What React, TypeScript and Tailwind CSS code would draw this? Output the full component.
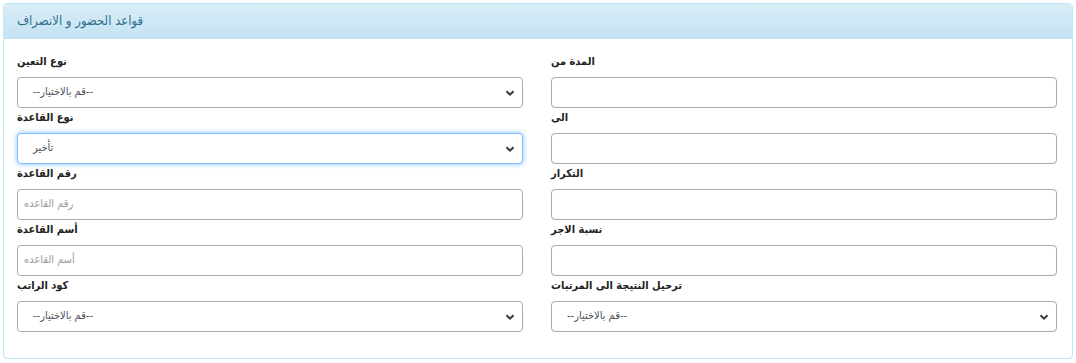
import React from "react";

const Chevron = () => (
  <svg width="10" height="8" viewBox="0 0 10 8" className="absolute right-[7px] top-1/2 -translate-y-1/2">
    <path d="M1.5 2.2 L5 5.7 L8.5 2.2" fill="none" stroke="#343a40" strokeWidth="2" />
  </svg>
);

function Select({ value, focused }: { value: string; focused?: boolean }) {
  return (
    <div
      className={
        "relative h-[31px] rounded-[4px] border bg-white flex items-center pl-[15px] text-[11px] text-[#495057] " +
        (focused
          ? "border-[#80bdff] shadow-[0_0_4px_1px_rgba(0,123,255,0.35)]"
          : "border-[#aaaaaa]")
      }
    >
      <span>{value}</span>
      <Chevron />
    </div>
  );
}

function Input({ placeholder }: { placeholder?: string }) {
  return (
    <div className="h-[31px] rounded-[4px] border border-[#aaaaaa] bg-white flex items-center pl-[6px] text-[11px] text-[#9a9a9a]">
      <span>{placeholder ?? ""}</span>
    </div>
  );
}

function Field({ label, children }: { label: string; children: React.ReactNode }) {
  return (
    <div className="flex flex-col">
      <div className="h-[25px] leading-[20px] text-[11px] font-bold text-[#222]">{label}</div>
      {children}
    </div>
  );
}

export default function App() {
  const choose = "--قم بالاختيار--";
  return (
    <div
      className="w-[1076px] h-[363px] bg-white pt-[3px] pl-[3px]"
      style={{ fontFamily: '"DejaVu Sans Condensed", "DejaVu Sans", Arial, sans-serif' }}
    >
      <div className="w-[1070px] border border-[#bce8f1] rounded-[4px] bg-white">
        <div className="h-[35px] border-b border-[#bce8f1] bg-gradient-to-b from-[#d9edf7] to-[#c4e3f3] rounded-t-[3px] flex items-center pl-[13px] text-[13px] text-[#31708f]">
          قواعد الحضور و الانصراف
        </div>
        <div className="pl-[13px] pt-[13px] pb-[26px] grid grid-cols-[506px_506px] gap-x-[28px]">
          <Field label="نوع التعين">
            <Select value={choose} />
          </Field>
          <Field label="المدة من">
            <Input />
          </Field>
          <Field label="نوع القاعدة">
            <Select value="تأخير" focused />
          </Field>
          <Field label="الى">
            <Input />
          </Field>
          <Field label="رقم القاعدة">
            <Input placeholder="رقم القاعده" />
          </Field>
          <Field label="التكرار">
            <Input />
          </Field>
          <Field label="أسم القاعدة">
            <Input placeholder="أسم القاعده" />
          </Field>
          <Field label="نسبة الاجر">
            <Input />
          </Field>
          <Field label="كود الراتب">
            <Select value={choose} />
          </Field>
          <Field label="ترحيل النتيجة الى المرتبات">
            <Select value={choose} />
          </Field>
        </div>
      </div>
    </div>
  );
}
